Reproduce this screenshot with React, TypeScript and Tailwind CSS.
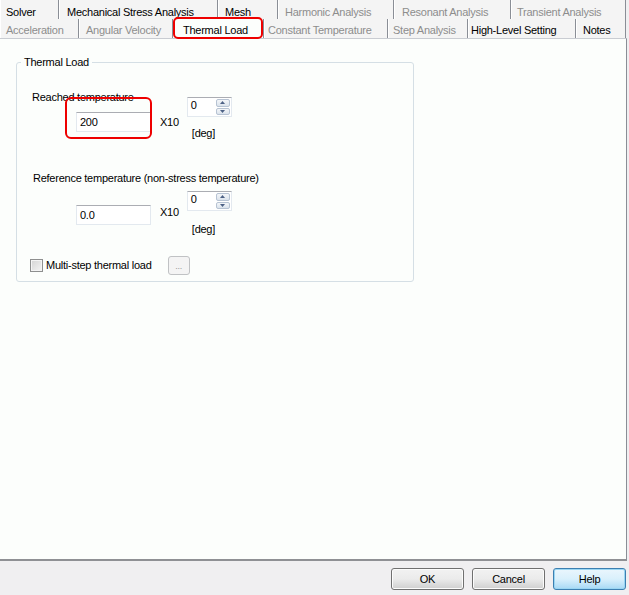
import React from "react";

type Tab = { label: string; w: string; pl: string; dim?: boolean; active?: boolean };

const ROW1: Tab[] = [
  { label: "Solver", w: "w-[59px]", pl: "pl-[6px]" },
  { label: "Mechanical Stress Analysis", w: "w-[159px]", pl: "pl-[8px]" },
  { label: "Mesh", w: "w-[60px]", pl: "pl-[7px]" },
  { label: "Harmonic Analysis", w: "w-[116px]", pl: "pl-[7px]", dim: true },
  { label: "Resonant Analysis", w: "w-[117px]", pl: "pl-[8px]", dim: true },
  { label: "Transient Analysis", w: "w-[115px]", pl: "pl-[6px]", dim: true },
];

const ROW2: Tab[] = [
  { label: "Acceleration", w: "w-[79px]", pl: "pl-[6px]", dim: true },
  { label: "Angular Velocity", w: "w-[94px]", pl: "pl-[7px]", dim: true },
  { label: "Thermal Load", w: "w-[91px]", pl: "pl-[10px]", active: true },
  { label: "Constant Temperature", w: "w-[124px]", pl: "pl-[4px]", dim: true },
  { label: "Step Analysis", w: "w-[80px]", pl: "pl-[5px]", dim: true },
  { label: "High-Level Setting", w: "w-[108px]", pl: "pl-[3px]" },
  { label: "Notes", w: "w-[50px]", pl: "pl-[7px]" },
];

function TabRow({ tabs, pt }: { tabs: Tab[]; pt: string }) {
  return (
    <div className="flex h-[19px] shrink-0">
      {tabs.map((t) => (
        <div
          key={t.label}
          className={`${t.w} ${t.pl} ${pt} relative whitespace-nowrap border-r border-r-[#8a8e96] shadow-[inset_1px_0_0_#ffffff] ${
            t.active ? "bg-[#fcfefc]" : "bg-[#f4f4f4]"
          } ${t.dim ? "text-[#8d8d8d]" : "text-black"}`}
        >
          {t.label}
          {t.active && (
            <div className="absolute left-0 right-0 top-[-2px] bottom-[-1px] border-2 border-[#ee0000] rounded-[5px]" />
          )}
        </div>
      ))}
      <div className="flex-1" />
    </div>
  );
}

function TextBox({ value }: { value: string }) {
  return (
    <div className="w-[75px] h-[20px] bg-white border border-[#e3e9ef] border-t-[#abadb3] flex items-center pl-[3px] pt-[1px]">
      {value}
    </div>
  );
}

function Spinner() {
  return (
    <div className="w-[45px] h-[20px] bg-white border border-[#e3e9ef] border-t-[#abadb3] flex">
      <div className="flex-1 pl-[3px] leading-[14px]">0</div>
      <div className="w-[15px] flex flex-col gap-px py-px pr-px">
        <div className="flex-1 rounded-[2px] border border-[#b7c3d3] bg-gradient-to-b from-[#f4f6f9] to-[#dbe3ec] flex items-center justify-center">
          <svg width="5" height="3" viewBox="0 0 5 3"><path d="M2.5 0 L5 3 L0 3 Z" fill="#4d6185" /></svg>
        </div>
        <div className="flex-1 rounded-[2px] border border-[#b7c3d3] bg-gradient-to-b from-[#f4f6f9] to-[#dbe3ec] flex items-center justify-center">
          <svg width="5" height="3" viewBox="0 0 5 3"><path d="M0 0 L5 0 L2.5 3 Z" fill="#4d6185" /></svg>
        </div>
      </div>
    </div>
  );
}

function Button({ label, focused }: { label: string; focused?: boolean }) {
  return (
    <button
      className={`w-[73px] h-[22px] rounded-[3px] border flex items-center justify-center text-black ${
        focused
          ? "border-[#3c7fb1] bg-gradient-to-b from-[#eaf6fd] via-[#d9f0fc] to-[#a7d9f5] shadow-[inset_0_0_0_1px_#9ad6f3]"
          : "border-[#707070] bg-gradient-to-b from-[#f2f2f2] via-[#ebebeb] to-[#cfcfcf] shadow-[inset_0_0_0_1px_#fcfcfc]"
      }`}
    >
      {label}
    </button>
  );
}

export default function App() {
  return (
    <div className="w-[629px] h-[595px] bg-[#f0eff1] flex flex-col text-[11px] leading-[13px] tracking-[-0.25px] font-['Liberation_Sans',Arial,sans-serif] overflow-hidden select-none">
      <TabRow tabs={ROW1} pt="pt-[6px]" />
      <TabRow tabs={ROW2} pt="pt-[5px]" />

      <div className="h-[523px] shrink-0 mr-[2px] bg-[#fcfefc] border-t border-t-[#c9ccd2] border-r border-r-[#8a8e96] border-b-2 border-b-[#8f9094] pt-[17px] pl-[16px]">
        <fieldset className="relative w-[398px] h-[226px] border border-[#d5dfe5] rounded-[3px] pl-[15px] pr-2">
          <legend className="-ml-[11px] px-[3px] text-black">Thermal Load</legend>

          {/* reached temperature */}
          <div className="relative flex items-start mt-[22px]">
            <div className="flex flex-col">
              <span>Reached temperature</span>
              <div className="ml-[44px] mt-[8px]">
                <TextBox value="200" />
              </div>
            </div>
            <span className="ml-[9px] mt-[25px]">X10</span>
            <div className="flex flex-col ml-[8px] mt-[6px]">
              <Spinner />
              <span className="ml-[5px] mt-[10px]">[deg]</span>
            </div>
            <div className="absolute left-[33px] top-[6px] w-[87px] h-[42px] border-2 border-[#ee0000] rounded-[6px]" />
          </div>

          {/* reference temperature */}
          <div className="mt-[32px] ml-px">Reference temperature (non-stress temperature)</div>
          <div className="flex items-start mt-[6px]">
            <div className="ml-[44px] mt-[14px]">
              <TextBox value="0.0" />
            </div>
            <span className="ml-[9px] mt-[15px]">X10</span>
            <div className="flex flex-col ml-[8px]">
              <Spinner />
              <span className="ml-[5px] mt-[12px]">[deg]</span>
            </div>
          </div>

          {/* multi-step */}
          <div className="flex items-center mt-[20px] -ml-[2px]">
            <div className="w-[13px] h-[13px] border border-[#8e8f8f] bg-gradient-to-br from-[#d4d4d4] to-[#f4f4f4] shadow-[inset_0_0_0_1px_#f4f4f4]" />
            <span className="ml-[3px]">Multi-step thermal load</span>
            <div className="ml-[16px] w-[22px] h-[19px] border border-[#c0c2c4] rounded-[3px] bg-[#f4f4f4] flex items-end justify-center pb-[3px] text-[#9a9a9a] text-[9px] leading-none">
              ...
            </div>
          </div>
        </fieldset>
      </div>

      <div className="flex justify-end items-start gap-[8px] pt-[7px] pr-[3px]">
        <Button label="OK" />
        <Button label="Cancel" />
        <Button label="Help" focused />
      </div>
    </div>
  );
}
